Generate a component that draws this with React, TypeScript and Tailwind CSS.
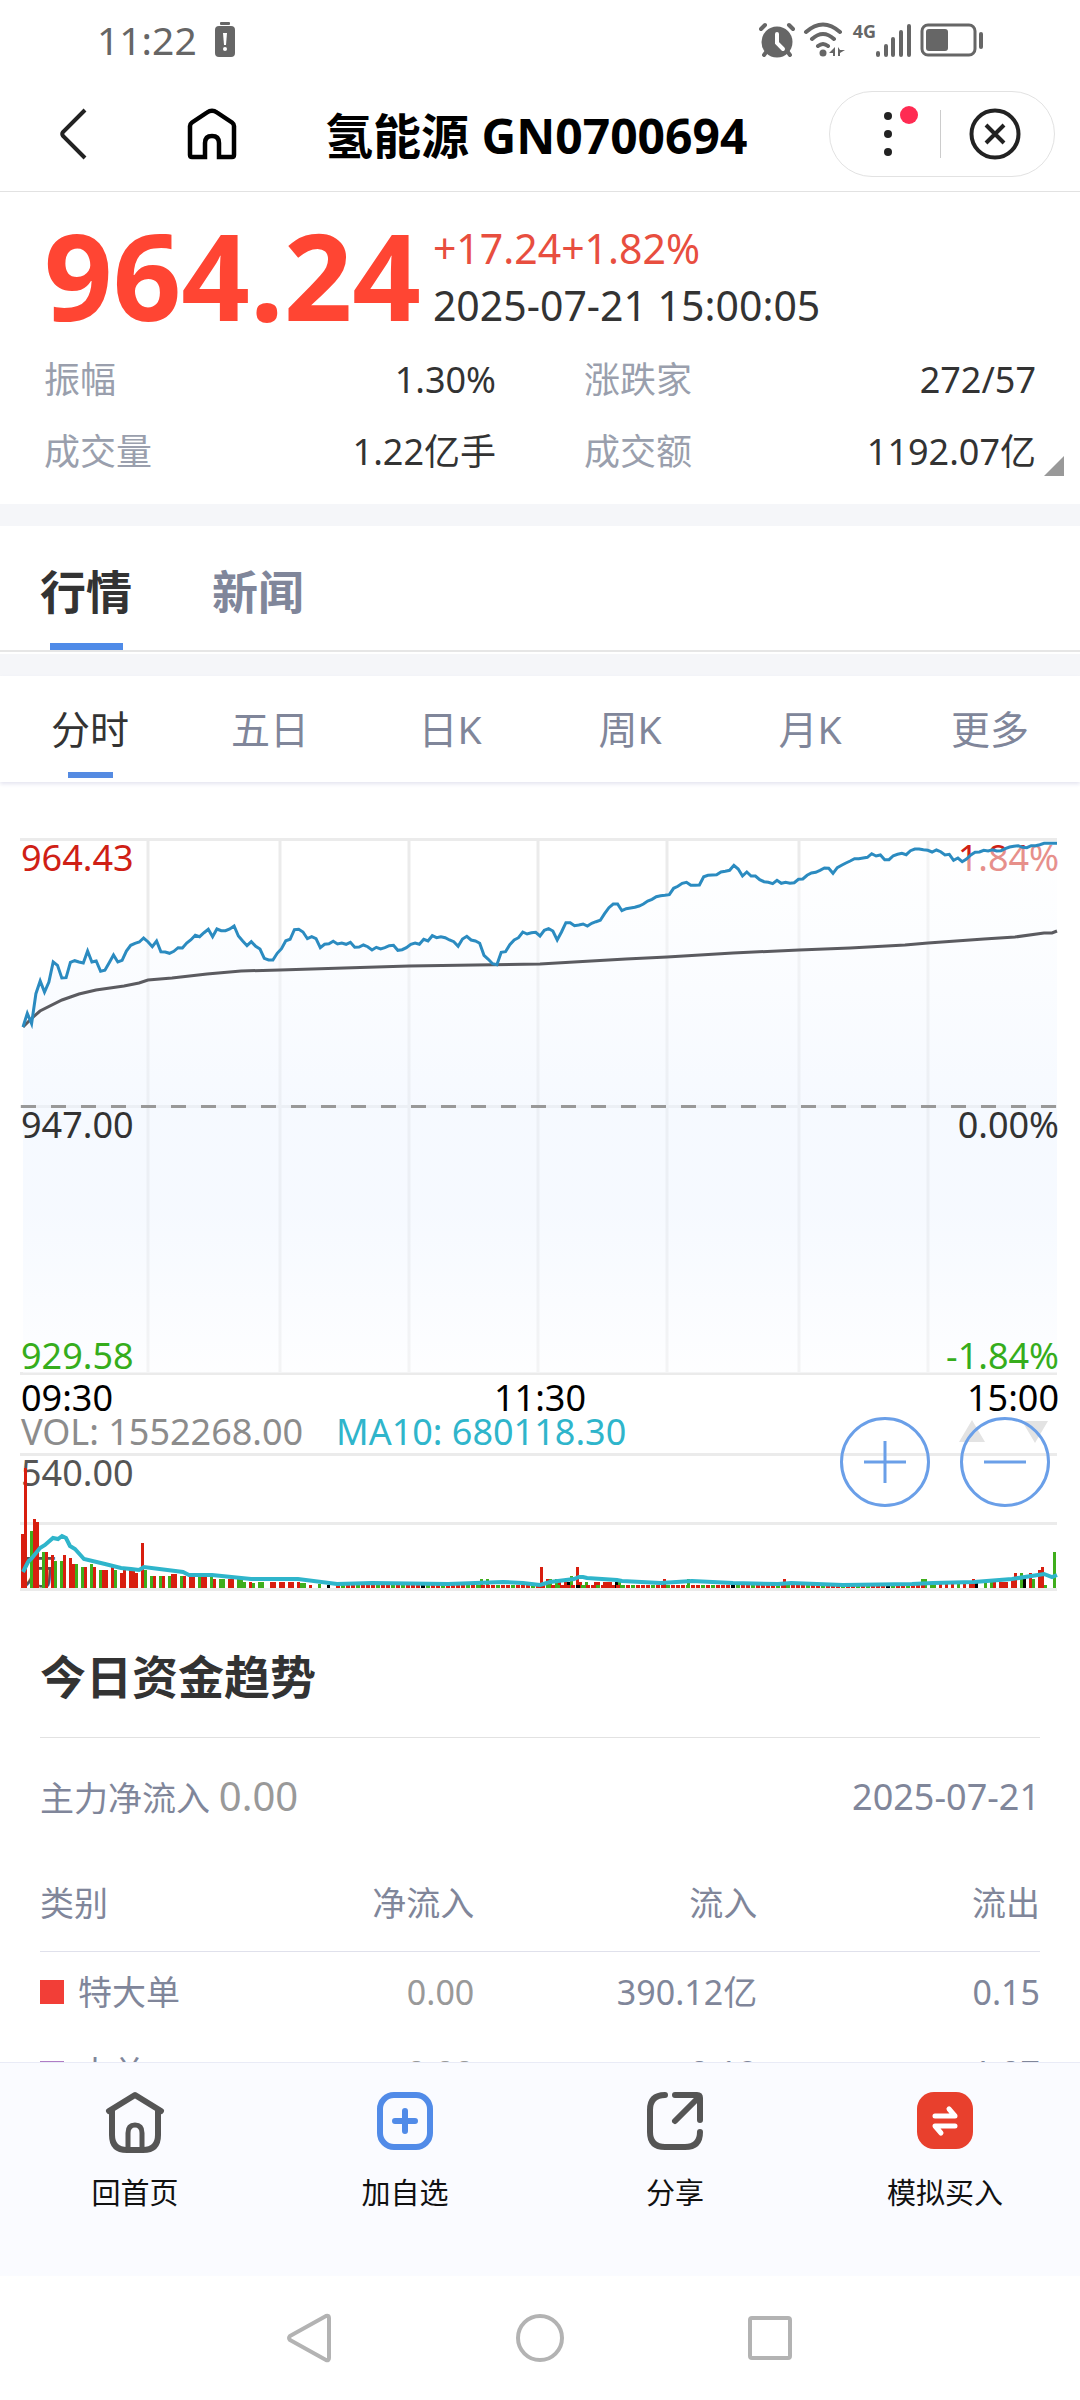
import { useState, type ReactNode } from 'react'

type Color = 'r' | 'g' | 'k'

const BAR_FILL: Record<Color, string> = { r: '#d81e0f', g: '#3fae1c', k: '#000000' }

// one sample a minute, 09:30 - 15:00, distance below the top line in 1/3 px
const PRICES = [
  648, 607, 638, 548, 510, 543, 513, 453, 463, 501, 500, 454, 449, 453, 456, 420, 453, 450, 481, 478,
  455, 432, 453, 448, 420, 403, 397, 393, 381, 392, 407, 390, 422, 423, 427, 421, 410, 411, 396, 386,
  373, 377, 365, 355, 377, 354, 359, 359, 354, 345, 375, 390, 404, 392, 406, 414, 442, 447, 447, 427,
  413, 389, 385, 356, 355, 363, 383, 377, 383, 410, 400, 398, 391, 399, 396, 400, 394, 409, 408, 402,
  407, 417, 409, 414, 410, 404, 403, 418, 416, 410, 400, 396, 400, 385, 390, 374, 380, 377, 380, 387,
  392, 406, 384, 376, 387, 390, 397, 433, 445, 458, 461, 424, 422, 401, 387, 380, 363, 369, 365, 364,
  375, 358, 353, 360, 387, 363, 335, 335, 344, 342, 339, 345, 337, 332, 328, 308, 290, 279, 279, 299,
  293, 291, 289, 285, 279, 270, 265, 257, 254, 253, 251, 232, 226, 217, 214, 223, 223, 222, 197, 193,
  192, 191, 183, 181, 178, 163, 174, 195, 183, 195, 195, 206, 212, 214, 218, 208, 217, 214, 217, 215,
  205, 204, 193, 186, 184, 178, 171, 172, 187, 170, 163, 156, 150, 143, 143, 141, 139, 128, 135, 132,
  146, 146, 134, 130, 127, 131, 119, 114, 114, 116, 118, 123, 117, 122, 132, 130, 148, 141, 152, 144,
  132, 124, 123, 118, 120, 116, 120, 119, 113, 108, 106, 104, 109, 110, 104, 104, 101, 97, 97, 97, 97,
]

const AVERAGE =
  '23,245 32,236 40,229 62,218 79,212 96,208 124,204 139,201 148,198 172,196 207,192 241,189 280,188 344,186 409,184 475,183 540,182 574,180 626,177 667,175 733,171 799,168 850,166 905,163 928,161 984,157 1015,155 1044,151 1052,151 1057,149'

const VOLUME_MA =
  '23,790 28,780 32,776 40,766 45,763 53,756 58,757 62,754 66,756 70,764 75,767 84,777 105,782 121,786 131,787 139,788 144,785 183,790 189,793 212,793 251,797 298,797 337,802 372,801 448,802 503,800 523,801 540,803 550,800 566,798 574,797 579,795 583,795 587,796 617,798 622,799 661,801 692,799 733,801 778,802 791,801 843,803 912,802 933,801 974,800 1012,797 1044,792 1052,795 1057,793'

// x, width, height, colour
const VOLUMES: [number, number, number, Color][] = [
  [21, 3, 54, 'r'], [24, 3, 120, 'r'], [30, 3, 57, 'g'], [33, 3, 69, 'r'], [36, 3, 66, 'r'],
  [42, 3, 36, 'g'], [45, 3, 36, 'r'], [51, 3, 33, 'r'], [54, 3, 27, 'g'], [60, 3, 27, 'g'],
  [63, 3, 33, 'r'], [69, 3, 30, 'r'], [72, 3, 24, 'r'], [75, 3, 24, 'g'], [81, 3, 21, 'g'],
  [84, 3, 21, 'r'], [90, 3, 24, 'g'], [93, 3, 21, 'r'], [99, 3, 18, 'g'], [102, 6, 18, 'r'],
  [111, 3, 21, 'r'], [114, 3, 18, 'g'], [120, 3, 15, 'r'], [123, 3, 18, 'r'], [129, 6, 18, 'r'],
  [135, 3, 15, 'r'], [141, 3, 45, 'r'], [144, 3, 18, 'g'], [150, 3, 12, 'g'], [153, 3, 12, 'r'],
  [159, 3, 12, 'g'], [162, 3, 12, 'r'], [168, 3, 12, 'g'], [171, 6, 14, 'r'], [180, 3, 12, 'g'],
  [183, 3, 12, 'r'], [189, 6, 12, 'r'], [198, 3, 14, 'g'], [201, 6, 11, 'r'], [210, 3, 14, 'g'],
  [213, 3, 9, 'r'], [219, 6, 9, 'g'], [228, 6, 9, 'r'], [237, 6, 9, 'g'], [243, 3, 6, 'g'],
  [249, 3, 6, 'r'], [252, 3, 5, 'g'], [258, 6, 6, 'g'], [270, 6, 6, 'r'], [279, 6, 6, 'r'],
  [288, 6, 6, 'r'], [297, 3, 6, 'r'], [300, 6, 5, 'g'], [309, 3, 3, 'r'], [318, 3, 4, 'g'],
  [327, 3, 3, 'k'], [480, 3, 9, 'g'], [486, 3, 9, 'g'], [540, 3, 21, 'r'], [546, 3, 9, 'r'],
  [549, 3, 9, 'g'], [555, 3, 9, 'g'], [558, 3, 8, 'r'], [564, 3, 6, 'r'], [567, 3, 6, 'k'],
  [570, 3, 12, 'g'], [576, 3, 21, 'r'], [579, 3, 6, 'r'], [585, 3, 6, 'g'], [594, 6, 6, 'r'],
  [603, 9, 6, 'r'], [615, 3, 6, 'k'], [618, 3, 9, 'g'], [663, 3, 9, 'r'], [687, 3, 9, 'g'],
  [783, 3, 9, 'r'], [921, 6, 9, 'g'], [930, 6, 6, 'g'], [939, 3, 6, 'r'], [945, 3, 5, 'r'],
  [951, 3, 5, 'r'], [957, 3, 6, 'g'], [963, 3, 5, 'r'], [969, 6, 5, 'r'], [972, 3, 9, 'r'],
  [975, 3, 5, 'k'], [984, 3, 8, 'g'], [990, 3, 7, 'g'], [993, 3, 6, 'r'], [999, 9, 6, 'r'],
  [1011, 3, 10, 'r'], [1014, 3, 15, 'r'], [1020, 3, 15, 'g'], [1023, 3, 9, 'k'], [1029, 3, 15, 'r'],
  [1032, 3, 9, 'g'], [1038, 3, 18, 'r'], [1041, 3, 21, 'r'], [1044, 3, 3, 'g'], [1053, 3, 36, 'g'],
]

// quiet stretch between the busy open and close
const QUIET = 'rgrrgrrrgrrgrgrrrkgrrgrrrrgrgrr'

const GRID_X = [148, 280, 409, 538, 667, 799, 928]

const STATS = [
  ['振幅', '1.30%'],
  ['涨跌家', '272/57'],
  ['成交量', '1.22亿手'],
  ['成交额', '1192.07亿'],
]

const PERIODS = ['分时', '五日', '日K', '周K', '月K', '更多']

const FLOWS = [
  { name: '特大单', color: 'bg-[#f23e37]', net: '0.00', inflow: '390.12亿', outflow: '0.15' },
  { name: '大单', color: 'bg-[#b07cc6]', net: '0.00', inflow: '0.18', outflow: '1.07' },
]

function StatusBar() {
  return (
    <div className="flex h-20 items-center justify-between pr-[96px] pl-[97px] text-[#666]">
      <div className="flex items-center gap-[18px]">
        <span className="text-[39px] leading-[40px]">11:22</span>
        <svg width="20" height="36" viewBox="0 0 20 36" fill="currentColor">
          <rect x="5" y="0" width="10" height="3" rx="1" />
          <rect x="0" y="4" width="20" height="31" rx="4" />
          <path d="M8 11h4l-1 12H9z" fill="#fff" />
          <circle cx="10" cy="27" r="2" fill="#fff" />
        </svg>
      </div>
      <div className="flex items-center gap-2">
        <svg width="36" height="36" viewBox="0 0 36 36" fill="none" stroke="currentColor" strokeLinecap="round">
          <circle cx="18" cy="20" r="15.500" fill="currentColor" stroke="none" />
          <path d="M2 7l4-4M34 7l-4-4M5 33l3-4M31 33l-3-4" strokeWidth="4" />
          <path d="M18 12v9l6 6" stroke="#fff" strokeWidth="4" />
        </svg>
        <svg width="42" height="36" viewBox="0 0 42 36" fill="none" stroke="currentColor" strokeWidth="4" strokeLinecap="round">
          <path d="M3 10Q20-5 37 10M9 17Q20 7 31 17M15 24Q20 20 25 24" />
          <circle cx="20" cy="31" r="3.500" fill="currentColor" stroke="none" />
          <path d="M32 25v9h-2v-3h-4zM35 25v9h2v-3l5-3h-5z" fill="currentColor" stroke="none" />
        </svg>
        <div className="flex items-start">
          <span className="text-[18px] leading-[18px] font-bold">4G</span>
          <svg width="36" height="36" viewBox="0 0 36 36" stroke="currentColor" strokeWidth="4" strokeLinecap="round">
            <path d="M2 31v2M10 24v9M17 17v16M25 10v23M33 4v29" />
          </svg>
        </div>
        <svg width="64" height="34" viewBox="0 0 64 34" fill="none" stroke="currentColor" strokeWidth="3">
          <rect x="2" y="2" width="53" height="30" rx="6" />
          <rect x="6" y="6" width="22" height="22" rx="3" fill="currentColor" stroke="none" />
          <path d="M61 11v13" strokeWidth="4" strokeLinecap="round" />
        </svg>
      </div>
    </div>
  )
}

function NavBar() {
  return (
    <header className="flex h-28 items-center border-b border-[#e2e2e2] pr-[25px] pl-[60px]">
      <button type="button" aria-label="返回" className="mb-1 flex w-[127px]">
        <svg width="28" height="52" viewBox="0 0 28 52" fill="none" stroke="#222" strokeWidth="4">
          <path d="M25 2L3 24q-1.500 2 0 4l22 22" />
        </svg>
      </button>
      <button type="button" aria-label="首页" className="mb-1 flex w-[138px]">
        <svg width="50" height="52" viewBox="0 0 50 52" fill="none" stroke="#000" strokeWidth="4.500">
          <path d="M3 18q0-2 2-3.500L20 4.500q5-3.500 10 0l15 10q2 1.500 2 3.500v29q0 2-2 2H32V35q0-7-7-7t-7 7v14H5q-2 0-2-2z" />
        </svg>
      </button>
      <h1 className="flex-1 text-[48px] leading-[64px] font-bold whitespace-nowrap text-black">氢能源 GN0700694</h1>
      <div className="mb-1 flex h-[86px] w-[226px] items-center rounded-full border border-[#e2e2e2] pr-1">
        <button type="button" aria-label="更多选项" className="relative flex h-12 flex-1 items-center justify-center border-r border-[#ccc]">
          <svg width="48" height="48" viewBox="0 0 48 48" fill="#222">
            <circle cx="27" cy="6" r="4" />
            <circle cx="27" cy="24" r="4" />
            <circle cx="27" cy="42" r="4" />
          </svg>
          <span className="absolute -top-1 right-[22px] size-[18px] rounded-full bg-[#ff2b52]" />
        </button>
        <button type="button" aria-label="关闭" className="flex flex-1 items-center justify-center">
          <svg width="52" height="52" viewBox="0 0 52 52" fill="none" stroke="#222" strokeWidth="4">
            <circle cx="26" cy="26" r="23.500" />
            <path d="M17 17l18 18M35 17L17 35" />
          </svg>
        </button>
      </div>
    </header>
  )
}

function Quote() {
  return (
    <section className="relative px-11 pt-6 pb-4">
      <div className="flex items-center gap-3">
        <strong className="text-[120px] leading-[116px] font-bold text-[#ff4533]">964.24</strong>
        <div className="pt-1 text-[41px] leading-[57px]">
          <p className="text-[#e84e3f]">+17.24+1.82%</p>
          <p className="text-[#333]">2025-07-21 15:00:05</p>
        </div>
      </div>
      <dl className="mt-[10px] grid grid-cols-2 gap-x-[88px]">
        {STATS.map(([label, value]) => (
          <div key={label} className="flex h-[72px] items-center justify-between text-[36px] leading-[48px]">
            <dt className="text-[#9a9fad]">{label}</dt>
            <dd className="text-[#333]">{value}</dd>
          </div>
        ))}
      </dl>
      <svg className="absolute right-4 bottom-7" width="20" height="20" viewBox="0 0 20 20">
        <path d="M20 0v20H0z" fill="#999" />
      </svg>
    </section>
  )
}

function Chart() {
  const step = 1034 / (PRICES.length - 1)
  const line = PRICES.map((v, i) => `${(23 + i * step).toFixed(1)},${(29 + v / 3).toFixed(1)}`).join(' ')
  const quiet = Array.from({ length: 118 }, (_, i) => ({
    x: 336 + i * 5,
    color: QUIET[i % QUIET.length] as Color,
  }))

  return (
    <div className="relative">
      <svg viewBox="0 0 1080 819" className="block w-full" fontSize="36">
        <defs>
          <linearGradient id="area" x1="0" y1="0" x2="0" y2="1">
            <stop offset="0" stopColor="#ffffff" />
            <stop offset="0.5" stopColor="#edf4ff" />
            <stop offset="0.7" stopColor="#edf4ff" />
            <stop offset="1" stopColor="#fcfdff" />
          </linearGradient>
        </defs>

        <g stroke="#ebebeb" strokeWidth="3">
          {GRID_X.map((x) => (
            <path key={x} d={`M${x} 58V591`} />
          ))}
          <path d="M20 57.500H1057M20 324.500H1057M20 591.500H1057M20 672.500H1057M20 741.500H1057M20 807.500H1057" />
        </g>
        <text x="1059" y="89" textAnchor="end" fill="#cf2015">1.84%</text>
        <polygon points={`23,591 ${line} 1057,591`} fill="url(#area)" fillOpacity="0.5" />
        <path d="M21 324.500H1057" stroke="#999" strokeWidth="3" strokeDasharray="15 15" />
        <polyline points={AVERAGE} fill="none" stroke="#5b5b60" strokeWidth="3" />
        <polyline points={line} fill="none" stroke="#2b8bc0" strokeWidth="3" />

        <text x="21" y="89" fill="#cf2015">964.43</text>
        <text x="21" y="356" fill="#333">947.00</text>
        <text x="1059" y="356" textAnchor="end" fill="#333">0.00%</text>
        <text x="21" y="587" fill="#36ad1c">929.58</text>
        <text x="1059" y="587" textAnchor="end" fill="#36ad1c">-1.84%</text>
        <text x="21" y="629">09:30</text>
        <text x="540" y="629" textAnchor="middle">11:30</text>
        <text x="1059" y="629" textAnchor="end">15:00</text>
        <text x="21" y="663" fill="#8c8c8c">VOL: 1552268.00</text>
        <text x="336" y="663" fill="#2fb5cb">MA10: 680118.30</text>
        <path d="M972 638l13 22h-26zM1022 639h26l-13 22z" fill="#e3e3e3" />

        <text x="21" y="704" fill="#555">540.00</text>
        <text x="21" y="803" fill="#555">万</text>
        {VOLUMES.map(([x, w, h, c]) => (
          <rect key={x} x={x} y={806 - h} width={w} height={h} fill={BAR_FILL[c]} />
        ))}
        {quiet.map(({ x, color }) => (
          <rect key={x} x={x} y="803" width="4" height="3" fill={BAR_FILL[color]} />
        ))}
        <polyline points={VOLUME_MA} fill="none" stroke="#2fb5cb" strokeWidth="4" />
      </svg>
      <div className="absolute right-[30px] bottom-[94px] flex gap-[30px]">
        <ZoomButton label="放大" d="M24 45H66M45 24V66" />
        <ZoomButton label="缩小" d="M24 45H66" />
      </div>
    </div>
  )
}

function ZoomButton({ label, d }: { label: string; d: string }) {
  return (
    <button type="button" aria-label={label} className="size-[90px]">
      <svg viewBox="0 0 90 90" fill="none" stroke="#6a9fe8" strokeWidth="3">
        <circle cx="45" cy="45" r="43.500" />
        <path d={d} />
      </svg>
    </button>
  )
}

function FundFlow() {
  return (
    <section className="px-10 pt-[42px] text-[34px] leading-[48px] text-[#80869a]">
      <h2 className="border-b border-[#e2e2e2] pb-[28px] text-[46px] leading-[66px] font-bold text-[#333]">今日资金趋势</h2>
      <div className="flex h-[118px] items-center justify-between">
        <p>
          主力净流入 <span className="text-[40px] text-[#999]">0.00</span>
        </p>
        <span className="text-[36px]">2025-07-21</span>
      </div>
      <table className="w-full table-fixed">
        <colgroup>
          <col className="w-[15%]" />
          <col className="w-[28%]" />
          <col className="w-[28%]" />
          <col className="w-[28%]" />
        </colgroup>
        <thead>
          <tr className="h-[95px] border-b border-[#e0e1ec] text-right">
            <th className="text-left font-normal whitespace-nowrap">类别</th>
            <th className="font-normal">净流入</th>
            <th className="font-normal">流入</th>
            <th className="font-normal">流出</th>
          </tr>
        </thead>
        <tbody>
          {FLOWS.map((f) => (
            <tr key={f.name} className="h-[81px] text-right">
              <td className="text-left whitespace-nowrap">
                <span className="flex items-center gap-[14px]">
                  <i className={`size-6 shrink-0 ${f.color}`} />
                  {f.name}
                </span>
              </td>
              <td className="text-[#999]">{f.net}</td>
              <td>{f.inflow}</td>
              <td>{f.outflow}</td>
            </tr>
          ))}
        </tbody>
      </table>
    </section>
  )
}

function Action({ label, children }: { label: string; children: ReactNode }) {
  return (
    <button type="button" className="flex flex-1 flex-col items-center gap-[30px]">
      <svg width="60" height="62" viewBox="0 0 60 62" fill="none" stroke="#555" strokeWidth="6" strokeLinecap="round" strokeLinejoin="round">
        {children}
      </svg>
      <span className="text-[29px] leading-[20px] text-[#111]">{label}</span>
    </button>
  )
}

function BottomBar() {
  return (
    <footer className="flex h-[214px] shrink-0 items-start border-t border-[#e9ebf7] bg-[#fafbff] pt-7">
      <Action label="回首页">
        <path d="M4 20L30 4l26 16M7 20v24q0 15 15 15h16q15 0 15-15V20" />
        <path d="M23 58V42q0-8 7-8t7 8v16" strokeWidth="5" />
      </Action>
      <Action label="加自选">
        <rect x="5" y="4" width="50" height="52" rx="14" stroke="#518be8" />
        <path d="M20 30h20M30 20v20" stroke="#518be8" />
      </Action>
      <Action label="分享">
        <path d="M20 4q-15 0-15 15v22q0 15 15 15h20q15 0 15-15M30 30L54 6M30 4h22q3 0 3 3v22" />
      </Action>
      <Action label="模拟买入">
        <rect x="2" y="1" width="56" height="57" rx="17" fill="#e8402d" stroke="none" />
        <path d="M20 25h20l-6-7M40 35H20l6 7" stroke="#fff" strokeWidth="5" />
      </Action>
    </footer>
  )
}

function SystemNav() {
  return (
    <nav className="flex h-[124px] shrink-0 items-center justify-center gap-[184px] bg-white pr-1">
      <button type="button" aria-label="系统返回">
        <svg width="48" height="50" viewBox="0 0 48 50" fill="none" stroke="#b3b3b3" strokeWidth="4" strokeLinejoin="round">
          <path d="M42 3q3-1 3 2v40q0 3-3 2L6 27q-2-2 0-4z" />
        </svg>
      </button>
      <button type="button" aria-label="系统主页" className="size-[48px] rounded-full border-4 border-[#b3b3b3]" />
      <button type="button" aria-label="最近任务" className="size-[44px] rounded-[4px] border-4 border-[#b3b3b3]" />
    </nav>
  )
}

export default function App() {
  const [tab, setTab] = useState('行情')
  const [period, setPeriod] = useState('分时')

  return (
    <div className="flex h-dvh flex-col bg-white font-['Noto_Sans','Noto_Sans_CJK_SC',sans-serif]">
      <StatusBar />
      <NavBar />
      <main className="min-h-0 flex-1 overflow-hidden">
        <Quote />
        <div className="h-[22px] bg-[#f5f6f9]" />
        <div className="flex h-[126px] gap-20 border-b-2 border-[#e6e6e6] px-10">
          {['行情', '新闻'].map((t) => (
            <button
              key={t}
              type="button"
              onClick={() => setTab(t)}
              className={`flex flex-col items-center text-[46px] leading-[64px] font-bold ${t === tab ? 'text-[#333]' : 'text-[#80869a]'}`}
            >
              <span className="pt-[33px]">{t}</span>
              {t === tab && <i className="mt-[20px] h-[9px] w-[73px] bg-[#4f8be8]" />}
            </button>
          ))}
        </div>
        <div className="mt-0.5 h-[22px] bg-[#f5f6f9]" />
        <div className="grid h-[106px] grid-cols-6 shadow-[0_2px_4px_#e4e4f0]">
          {PERIODS.map((p) => (
            <button
              key={p}
              type="button"
              onClick={() => setPeriod(p)}
              className={`flex flex-col items-center text-[39px] leading-[56px] ${p === period ? 'text-[#333]' : 'text-[#80869a]'}`}
            >
              <span className="pt-[25px]">{p}</span>
              {p === period && <i className="mt-[15px] h-[6px] w-[45px] bg-[#558be2]" />}
            </button>
          ))}
        </div>
        <Chart />
        <FundFlow />
      </main>
      <BottomBar />
      <SystemNav />
    </div>
  )
}
